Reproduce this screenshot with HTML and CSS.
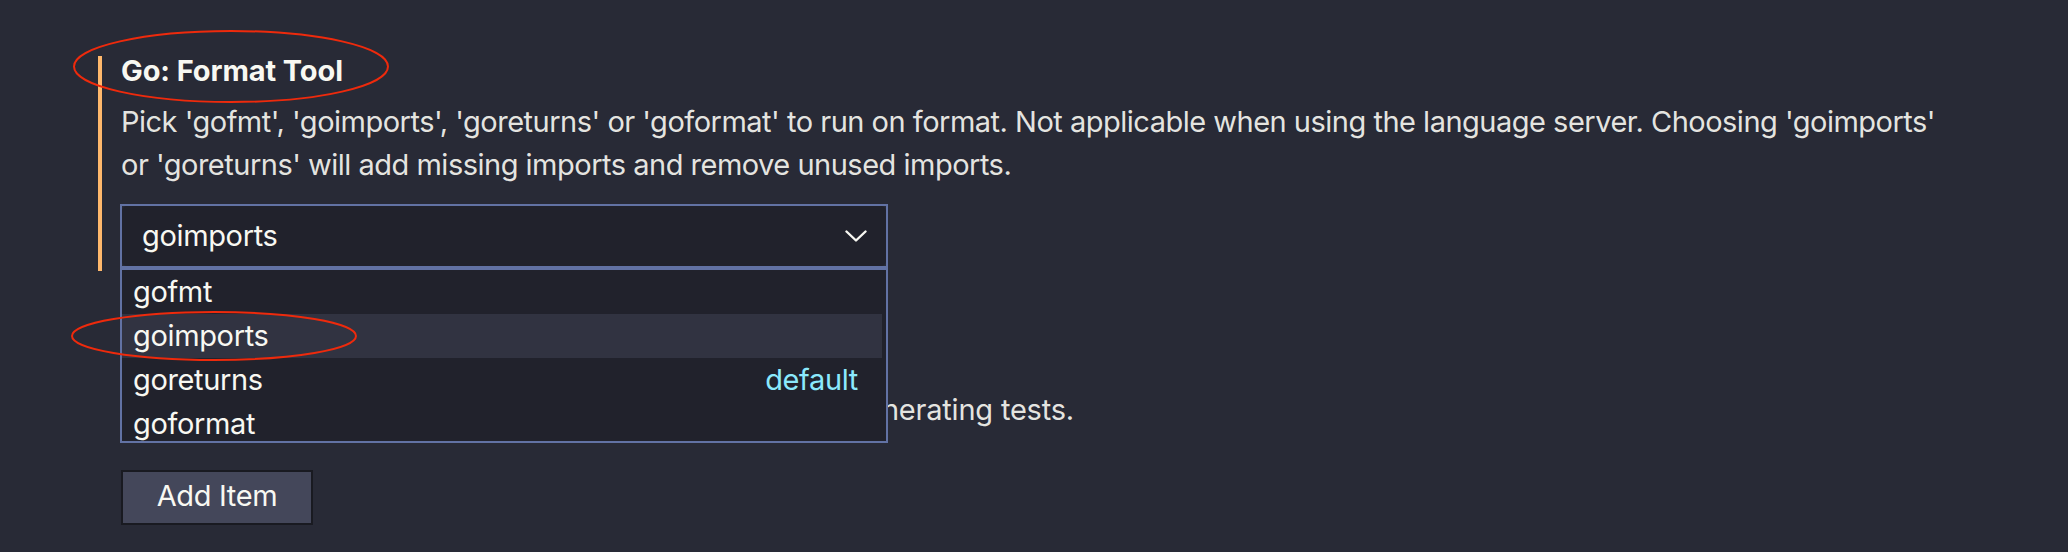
FILE: index.html
```html
<!DOCTYPE html>
<html>
<head>
<meta charset="utf-8">
<link rel="stylesheet" href="styles.css">
</head>
<body>
<div class="settings-list">
  <div class="setting modified">
    <div class="title">Go: Format Tool</div>
    <div class="desc desc-long">Pick 'gofmt', 'goimports', 'goreturns' or 'goformat' to run on format. Not applicable when using the language server. Choosing 'goimports' or 'goreturns' will add missing imports and remove unused imports.</div>
    <div class="select-wrap">
      <div class="select">
        <div class="select-inner">
          <span class="select-value">goimports</span>
          <svg class="chevron" width="22" height="12" viewBox="0 0 22 12"><path d="M1.5 1.5 L11 10.5 L20.5 1.5" fill="none" stroke="#f8f8f2" stroke-width="2.4" stroke-linecap="round" stroke-linejoin="round"/></svg>
        </div>
      </div>
      <div class="dropdown">
        <div class="option">gofmt</div>
        <div class="option active">goimports</div>
        <div class="option">goreturns<span class="default">default</span></div>
        <div class="option">goformat</div>
      </div>
    </div>
  </div>
  <div class="setting">
    <div class="title">Go: Generate Tests Flags</div>
    <div class="desc">Additional command line flags to pass to `gotests` for generating tests.</div>
    <button class="add-btn">Add Item</button>
  </div>
</div>
<svg class="annotations" width="2068" height="552" viewBox="0 0 2068 552">
  <ellipse cx="231" cy="66.5" rx="157" ry="35.5" fill="none" stroke="#ee2a0c" stroke-width="2"/>
  <ellipse cx="214" cy="336" rx="142" ry="24" fill="none" stroke="#ee2a0c" stroke-width="2"/>
</svg>
</body>
</html>
```
FILE: styles.css
```css
html, body {
  margin: 0;
  padding: 0;
  background: #282a36;
  width: 2068px;
  height: 552px;
  overflow: hidden;
}
body {
  font-family: Inter, "Liberation Sans", sans-serif;
  font-size: 29px;
  letter-spacing: -0.35px;
  color: #f8f8f2;
  position: relative;
}
.settings-list {
  padding-top: 56px;
  margin-left: 98px;
}
.setting {
  border-left: 4px solid transparent;
  padding: 0 0 3px 19px;
}
.setting.modified {
  border-left-color: #ffb86c;
}
.setting + .setting {
  margin-top: 73px;
}
.title {
  font-weight: 700;
  line-height: 30px;
  letter-spacing: -0.1px;
  white-space: nowrap;
}
.desc {
  margin-top: 14px;
  line-height: 43px;
  max-width: 1830px;
  letter-spacing: -0.2px;
  color: rgba(248, 248, 242, 0.92);
}
.desc-long {
  letter-spacing: -0.5px;
}
.select-wrap {
  position: relative;
  width: 768px;
  margin-left: -1px;
  margin-top: 18px;
}
.select {
  border: 2px solid #6272a4;
  background: #282a36;
  height: 60px;
}
.select-inner {
  height: 60px;
  background: #21222c;
  border-radius: 5px;
  display: flex;
  align-items: center;
  justify-content: space-between;
  padding: 0 19px 0 20px;
  line-height: 60px;
}
.chevron {
  display: block;
}
.dropdown {
  position: absolute;
  left: 0;
  top: 62px;
  width: 764px;
  height: 171px;
  overflow: hidden;
  border: 2px solid #6272a4;
  border-top-width: 4px;
  background: #21222c;
  z-index: 2;
}
.option {
  height: 44px;
  line-height: 44px;
  padding: 0 24px 0 11px;
  margin-right: 4px;
  display: flex;
  justify-content: space-between;
  white-space: nowrap;
}
.option.active {
  background: #313341;
}
.default {
  color: #8be9fd;
}
.add-btn {
  margin-top: 39px;
  font-family: inherit;
  font-size: 29px;
  letter-spacing: -0.35px;
  color: #f8f8f2;
  background: #44475a;
  border: 2px solid #191a21;
  width: 192px;
  padding: 0 0 3px;
  text-align: center;
  line-height: 48px;
  height: 55px;
  display: block;
}
.annotations {
  position: absolute;
  left: 0;
  top: 0;
  pointer-events: none;
  z-index: 5;
}
```
